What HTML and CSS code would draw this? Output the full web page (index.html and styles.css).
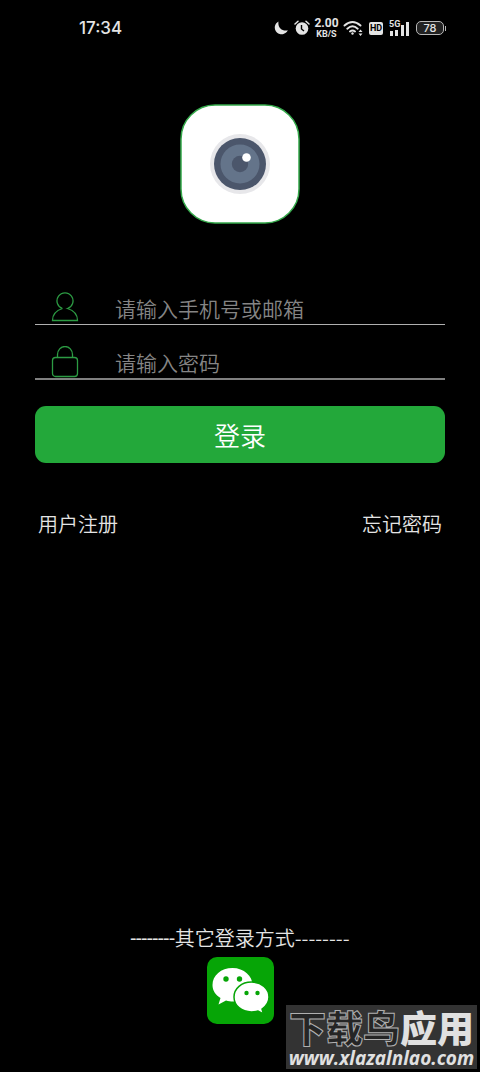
FILE: index.html
```html
<!DOCTYPE html>
<html lang="zh-CN">
<head>
<meta charset="utf-8">
<meta name="viewport" content="width=device-width, initial-scale=1">
<title>登录</title>
<link rel="stylesheet" href="styles.css">
</head>
<body>
<div class="screen">
  <header class="status">
    <time class="clock">17:34</time>
    <div class="indicators">
      <svg width="14" height="14" viewBox="0 0 14 14" fill="#e4e4e4"><path d="M4.500 .5A6.800 6.800 0 1 0 13.800 9.300C8 10.500 3.500 6.500 4.500 .5Z"/></svg>
      <svg width="16" height="16" viewBox="0 0 16 16"><circle cx="8" cy="8.500" r="6.300" fill="#e4e4e4"/><path d="M1 4 4 1.300M12 1.300 15 4" stroke="#e4e4e4" stroke-width="1.500" stroke-linecap="round"/><path d="M7.500 5v4l2.500 2" fill="none" stroke="#000" stroke-width="1.400"/></svg>
      <div class="speed"><span class="rate">2.00</span><span class="unit">KB/S</span></div>
      <svg width="20" height="16" viewBox="0 0 20 16" fill="none" stroke="#e4e4e4" stroke-width="1.900" stroke-linecap="round"><path d="M1.500 5.500Q9.500-1.500 17.500 5.500M4.300 8.700Q9.500 4 14.700 8.700M7 11.500Q9.500 9.500 12 11.500"/><circle cx="9.500" cy="13.500" r="1.200" fill="#e4e4e4" stroke="none"/><path d="m15.500 12 2-2.500 2 2.500Zm0 1.500 2 2.500 2-2.500Z" fill="#e4e4e4" stroke="none"/></svg>
      <span class="hd">HD</span>
      <div class="signal">
        <span class="network">5G</span>
        <svg width="21" height="15" viewBox="0 0 21 15" fill="#e4e4e4"><path d="M1 10h3v5H1zM6 9h3v6H6zM12 4h3v11h-3zM17 1h3v14h-3z"/></svg>
      </div>
      <div class="battery"><span class="level">78</span><i class="tip"></i></div>
    </div>
  </header>

  <main class="content">
    <svg class="logo" viewBox="0 0 120 120" role="img" aria-label="相机">
      <rect x="1" y="1" width="118" height="118" rx="34" fill="#fff" stroke="#35a94b" stroke-width="1.500"/>
      <circle cx="60" cy="60" r="30" fill="#e7e7ea"/>
      <circle cx="60" cy="60" r="26" fill="#4b566b"/>
      <circle cx="60" cy="60" r="19.500" fill="#64748a"/>
      <circle cx="60" cy="60" r="8.200" fill="#4b566b"/>
      <circle cx="66.500" cy="53.500" r="4.300" fill="#fff"/>
    </svg>

    <form class="login">
      <label class="field">
        <svg class="field-icon" viewBox="0 0 28 32"><path d="M11.500 16.500a8 8 0 1 1 5 0C23 18.500 26.500 22 26.500 28.500h-25C1.500 22 5 18.500 11.500 16.500"/></svg>
        <input class="input" type="text" aria-label="账号" placeholder="请输入手机号或邮箱">
      </label>
      <label class="field">
        <svg class="field-icon" viewBox="0 0 28 32"><rect x="1.500" y="11.500" width="25" height="19" rx="3"/><path d="M6.500 11.500V8.500a7.500 8 0 0 1 15 0V11.500"/></svg>
        <input class="input" type="password" aria-label="密码" placeholder="请输入密码">
      </label>
      <button class="submit" type="button">登录</button>
    </form>

    <nav class="links">
      <a class="link" href="#register">用户注册</a>
      <a class="link" href="#forgot">忘记密码</a>
    </nav>
  </main>

  <footer class="other">
    <div class="other-title"><span class="dash-tight">--------</span>其它登录方式<span>--------</span></div>
    <button class="wechat" type="button" aria-label="微信登录">
      <svg class="wechat-icon" viewBox="0 0 67 67">
        <path d="M25.500 11C14 11 5.500 18.500 5.500 28c0 5.500 3 10 8 13l-2 6.500 7.500-4c2.500.7 4.500 1 7 1 11 0 19.500-7.500 19.500-16.500S37 11 25.500 11Z" fill="#fff"/>
        <path d="M44.500 25C34.500 25 27 31.500 27 40s7.500 15 17.500 15c2.500 0 4.500-.3 6.500-1l5.500 3-1.500-5c4.500-3 7-7 7-12 0-8.500-7.500-15-17.500-15Z" fill="#fff" stroke="#06a506" stroke-width="1.500"/>
        <g fill="#06a506"><circle cx="19" cy="22" r="2.700"/><circle cx="32.500" cy="22" r="2.700"/><circle cx="39.500" cy="36" r="2.200"/><circle cx="50.500" cy="36" r="2.200"/></g>
      </svg>
    </button>
  </footer>

  <aside class="watermark">
    <div class="mark-name"><span class="mark-outline">下载鸟</span><span>应用</span></div>
    <div class="mark-site">www.xlazalnlao.com</div>
  </aside>
</div>
</body>
</html>
```
FILE: styles.css
```css
* { box-sizing: border-box; }
body {
  margin: 0;
  background: #000;
  color: #e4e4e4;
  font-family: Roboto, "Noto Sans CJK SC", sans-serif;
}
.screen {
  position: relative;
  min-height: 100vh;
  display: flex;
  flex-direction: column;
}
.status {
  display: flex;
  align-items: center;
  justify-content: space-between;
  height: 56px;
  padding: 0 34px 0 79px;
}
.clock { font: 500 17px/20px Inter, sans-serif; }
.indicators { display: flex; align-items: center; gap: 6px; }
.speed {
  display: flex;
  flex-direction: column;
  align-items: center;
  width: 25px;
  margin: 0 -2px;
  font-family: Roboto, sans-serif;
  font-weight: 700;
}
.rate { font-size: 12px; line-height: 11px; }
.unit { font-size: 9px; line-height: 10px; }
.hd {
  width: 14px;
  border-radius: 2px;
  background: #e4e4e4;
  color: #000;
  font: 700 9px/13px Roboto, sans-serif;
  text-align: center;
}
.signal { position: relative; display: flex; }
.network {
  position: absolute;
  top: -2px;
  left: 0;
  background: #000;
  font: 700 9px/10px Roboto, sans-serif;
}
.battery { display: flex; align-items: center; gap: 1px; }
.level {
  width: 28px;
  border: 1px solid #b8b8b8;
  border-radius: 5px;
  background: #222;
  font: 500 11px/12px Inter, sans-serif;
  text-align: center;
}
.tip { width: 1px; height: 5px; background: #b8b8b8; }

.content { flex: 1; padding: 48px 35px 0; }
.logo { display: block; width: 120px; height: 120px; margin: 0 auto; }
.login { margin-top: 54px; }
.field {
  display: flex;
  align-items: flex-end;
  height: 47px;
  padding-left: 16px;
  border-bottom: 1px solid #b0b0b0;
}
.field + .field { height: 55px; border-bottom: 2px solid #808080; }
.field-icon {
  flex: none;
  width: 28px;
  height: 32px;
  fill: none;
  stroke: #2c9b43;
  stroke-width: 1.3;
}
.input {
  flex: 1;
  min-width: 0;
  height: 32px;
  margin-left: 36px;
  padding: 0;
  border: 0;
  outline: 0;
  background: none;
  color: #fff;
  font: 350 21px/32px "Noto Sans CJK SC", sans-serif;
}
.input::placeholder { color: #858585; opacity: 1; }
.submit {
  display: block;
  width: 100%;
  height: 57px;
  margin-top: 26px;
  padding: 0;
  border: 0;
  border-radius: 11px;
  background: #23a83a;
  color: #fff;
  font: 350 26px/57px "Noto Sans CJK SC", sans-serif;
}
.links { display: flex; justify-content: space-between; margin-top: 46px; padding: 0 3px; }
.link {
  color: #e4e4e4;
  font: 350 20px/30px "Noto Sans CJK SC", sans-serif;
  text-decoration: none;
}

.other { display: flex; flex-direction: column; align-items: center; padding-bottom: 48px; }
.other-title {
  display: flex;
  font: 350 20px/30px "Noto Sans CJK SC", sans-serif;
}
.dash-tight { font-family: Roboto, sans-serif; font-weight: 400; }
.wechat {
  width: 67px;
  height: 67px;
  margin-top: 4px;
  padding: 0;
  border: 0;
  border-radius: 10px;
  background: #06a506;
}
.wechat-icon { display: block; width: 100%; }

.watermark {
  position: absolute;
  right: 3px;
  bottom: 3px;
  width: 191px;
  padding: 2px 0 0;
  background: #333;
  color: #e0e0e0;
  text-align: center;
  white-space: nowrap;
}
.mark-name { font: 900 37px/40px "Noto Sans CJK SC", sans-serif; }
.mark-outline {
  color: #252525;
  -webkit-text-stroke: 1px #b0b0b0;
}
.mark-site { font: italic 700 19px/22px "Open Sans", "Noto Sans", sans-serif; }
```
